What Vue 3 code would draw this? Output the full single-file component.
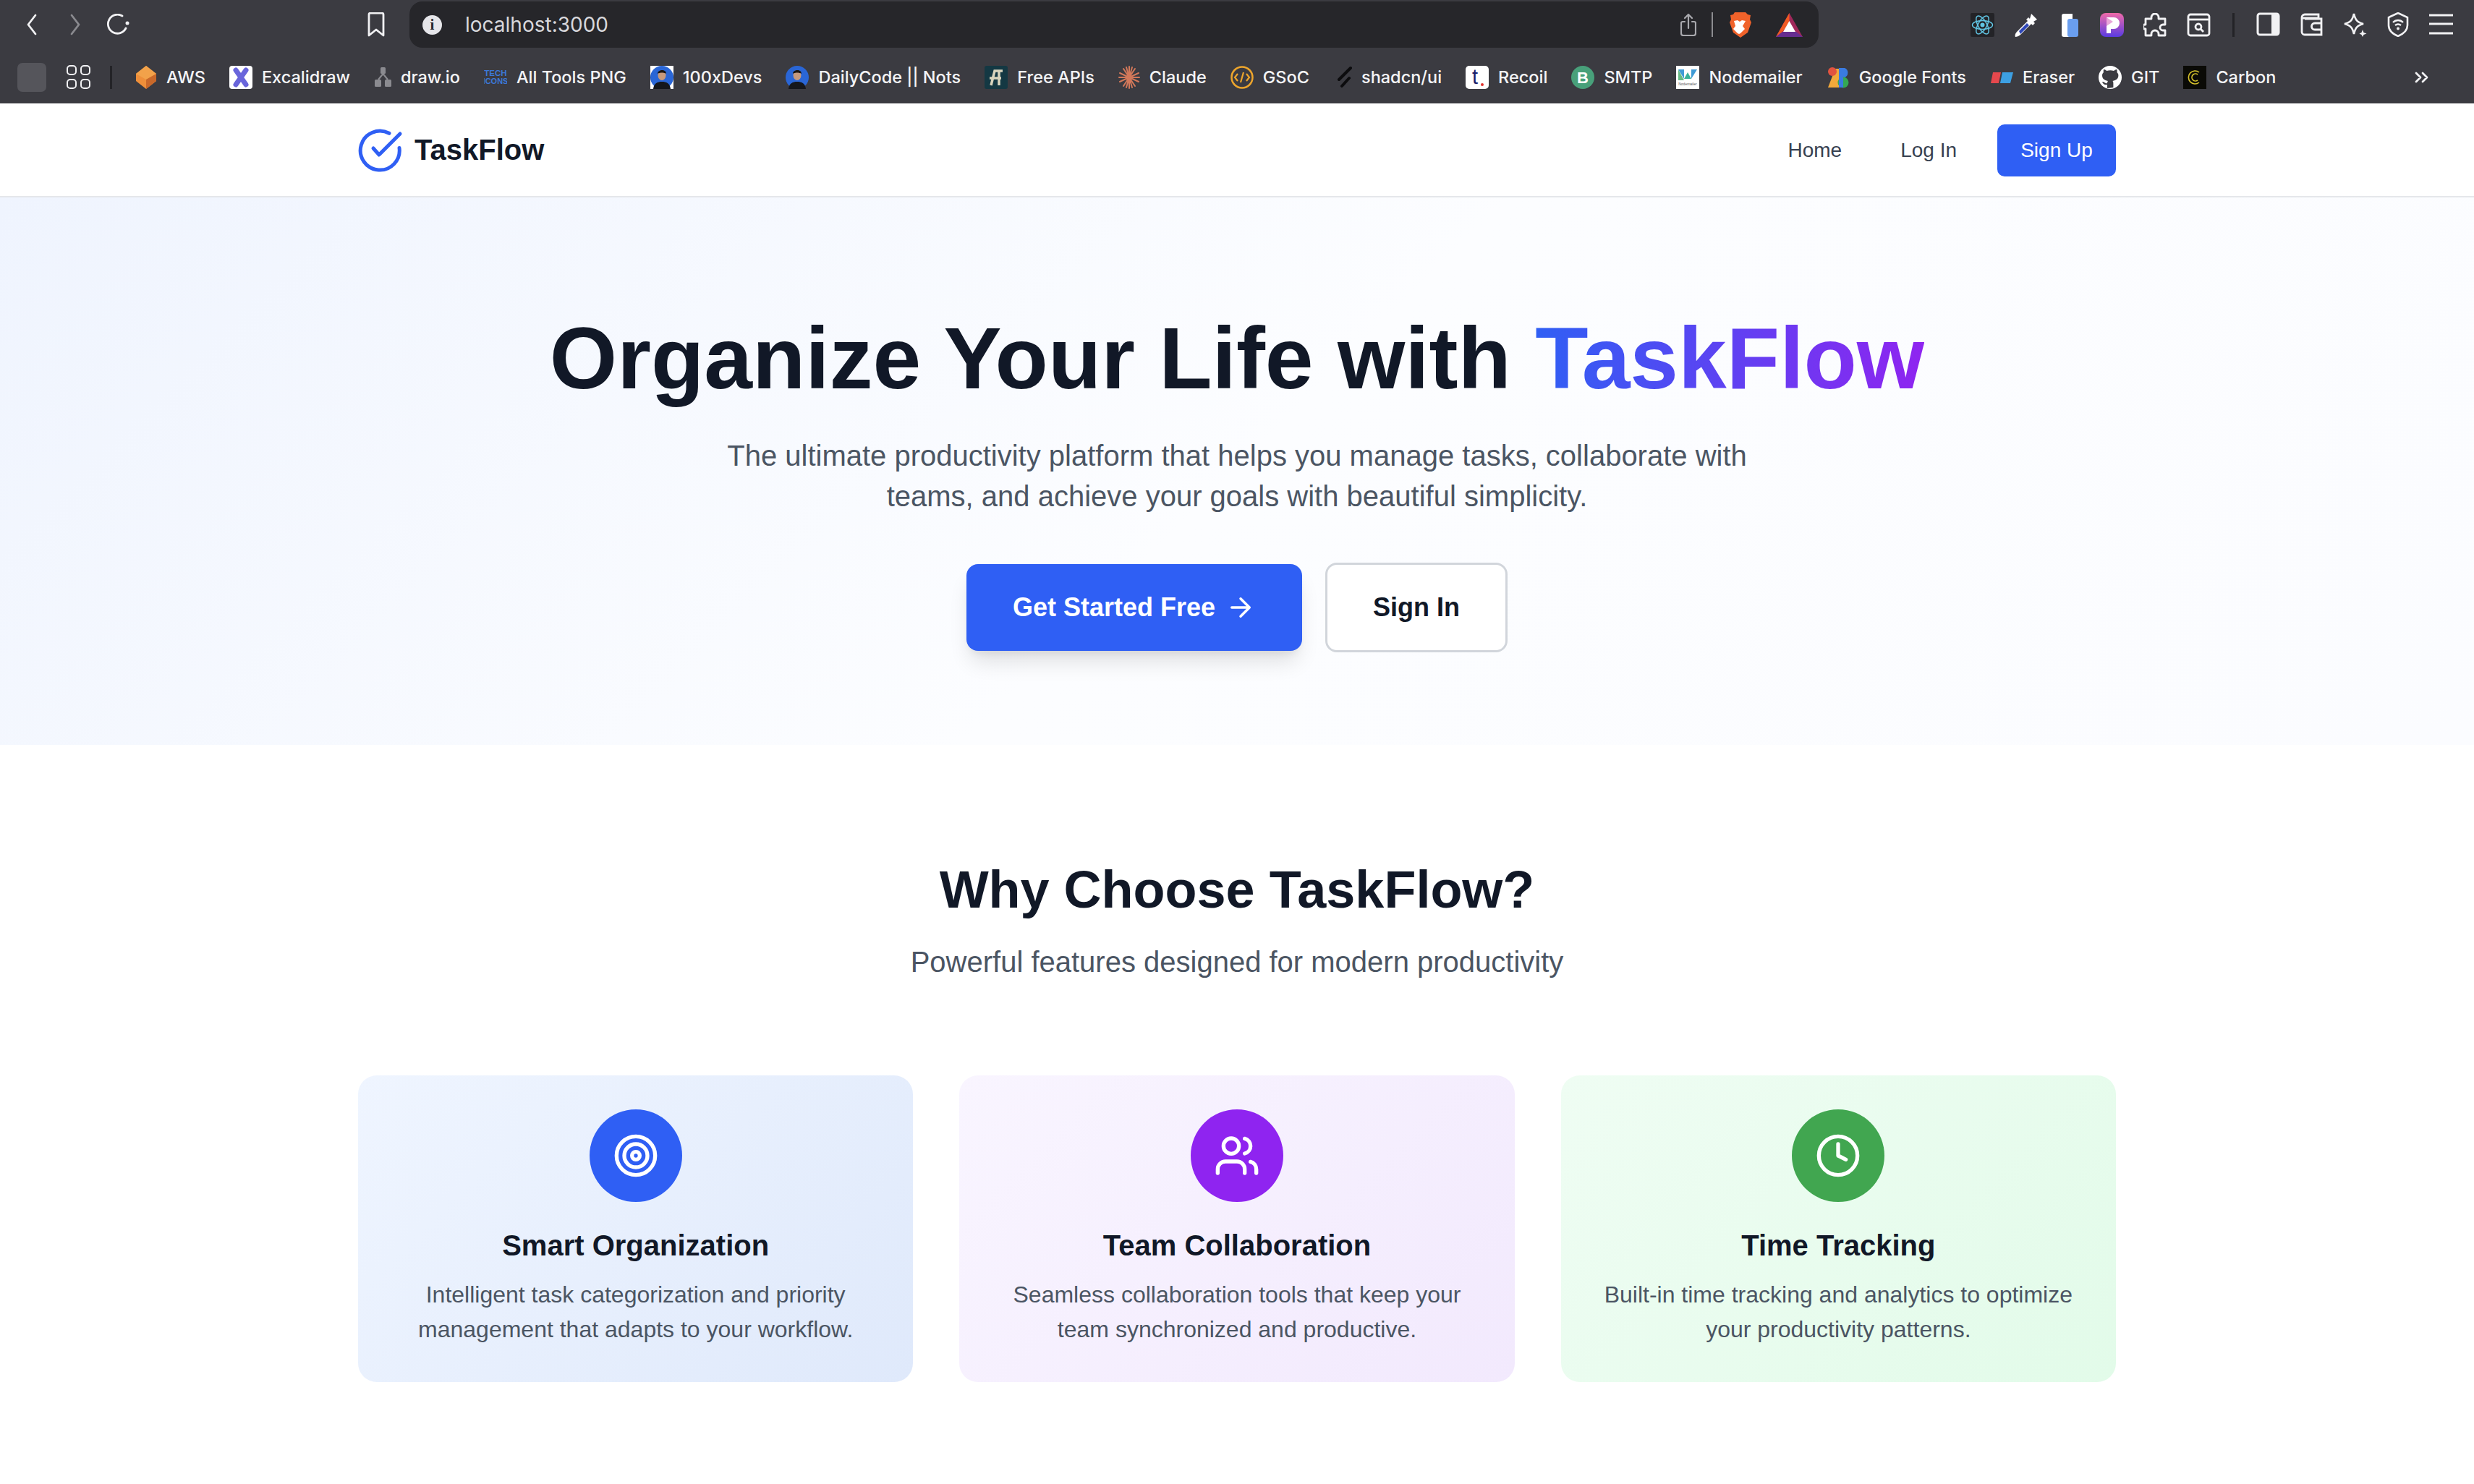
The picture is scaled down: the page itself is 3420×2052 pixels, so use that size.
<script setup>
const face = (bg) => `<rect width="32" height="32" fill="${bg}"/><circle cx="16" cy="16" r="16" fill="#2a66d6"/><path d="M4 32c1-8 6-10 12-10s11 2 12 10z" fill="#15171c"/><ellipse cx="16" cy="13" rx="5.5" ry="7" fill="#c79a7c"/><path d="M10 11c0-6 12-7 12 0-3-2-9-2-12 0z" fill="#1c1714"/>`

const bookmarks = [
  { name: 'AWS', icon: '<g transform="translate(1 0)"><path d="M14 0 28 11v10L14 32 0 21V11z" fill="#ee8f3a"/><path d="M14 0 0 11l14 8 14-8z" fill="#f2a24a"/><path d="M14 19v13l14-11V11z" fill="#c9682a"/></g>', w: 30 },
  { name: 'Excalidraw', icon: '<rect width="32" height="32" rx="4" fill="#fff"/><path d="M9 6l14 20M23 6 9 26" stroke="#6965db" stroke-width="7" stroke-linecap="round"/>' },
  { name: 'draw.io', icon: '<g fill="#8b8b90"><rect x="9" y="2" width="7" height="9" rx="1.5"/><rect x="1" y="19" width="9" height="10" rx="1.5"/><rect x="15" y="19" width="9" height="10" rx="1.5"/></g><path d="M12.500 11 6 19M12.500 11 19 19" stroke="#8b8b90" stroke-width="2"/>', w: 24 },
  { name: 'All Tools PNG', icon: '<text x="16" y="14" font-size="11.500" font-weight="700" text-anchor="middle" fill="#3c78d8" font-family="Liberation Sans">TECH</text><text x="16" y="25" font-size="11" font-weight="700" text-anchor="middle" fill="#3c78d8" font-family="Liberation Sans">ICONS</text>' },
  { name: '100xDevs', icon: face('#fff') },
  { name: 'DailyCode || Nots', icon: face('transparent') },
  { name: 'Free APIs', icon: '<rect width="32" height="32" rx="3" fill="#143843"/><path d="M9 27 14 7h11M7 17h16M20 8v19" stroke="#d8d4bd" stroke-width="3.500" fill="none"/>' },
  { name: 'Claude', icon: '<g stroke="#d2785a" stroke-width="2" stroke-linecap="round"><path d="M15 1v30M7 4l16 24M23 4 7 28M1 16h28M2 10l26 12M28 10 2 22M11 2l8 28M19 2l-8 28"/></g>', w: 30 },
  { name: 'GSoC', icon: '<circle cx="16" cy="16" r="14.500" fill="none" stroke="#eda52c" stroke-width="2.500"/><path d="M10 11l-4 5 4 5M22 11l4 5-4 5M18 9l-4 14" fill="none" stroke="#eda52c" stroke-width="2.200"/>' },
  { name: 'shadcn/ui', icon: '<path d="M24 3 8 19M22 17l-10 11" stroke="#0c0c0e" stroke-width="4" stroke-linecap="round"/>', w: 26 },
  { name: 'Recoil', icon: '<rect width="32" height="32" rx="5" fill="#fff"/><text x="13" y="25" font-size="29" text-anchor="middle" fill="#1a1f6b" font-family="Liberation Sans">t</text><circle cx="23" cy="26" r="2" fill="#e0312c"/>' },
  { name: 'SMTP', icon: '<circle cx="16" cy="16" r="16" fill="#48a07a"/><text x="16" y="24" font-size="22" font-weight="700" text-anchor="middle" fill="#fff" font-family="Liberation Sans">B</text>' },
  { name: 'Nodemailer', icon: '<rect width="32" height="32" fill="#fff"/><path d="M3 5l8 13V5zM29 5l-8 13V5z" fill="#3f9bd6"/><path d="M11 18 16 9l5 9z" fill="#39b29a"/><path d="M3 5v15h8z" fill="#68bb85"/><text x="16" y="27" font-size="5" text-anchor="middle" fill="#555" font-family="Liberation Sans">Nodemailer</text>' },
  { name: 'Google Fonts', icon: '<path d="M2 30 12 4h5v26z" fill="#f2a93b"/><circle cx="8" cy="8" r="6" fill="#e2533f"/><path d="M17 3h8a7 7 0 0 1 0 13h-8z" fill="#3a7be0"/><circle cx="23" cy="23" r="7.500" fill="#34a853"/><path d="M17 16h6v14h-6z" fill="#3a7be0"/>' },
  { name: 'Eraser', icon: '<path d="M4 9h11l-3 15H1z" fill="#e5484d"/><path d="M17 9h15l-4 15H14z" fill="#3da0e3"/>' },
  { name: 'GIT', icon: '<circle cx="16" cy="16" r="16" fill="#fff"/><path d="M12 31v-5c-5 1-6-2-7-4 3 0 4 3 7 2 0-2 1-3 1-3-5-1-8-3-8-8 0-2 1-3 2-4-.4-1-.4-3 .2-4 2 0 3 1 4 2 3-1 7-1 10 0 1-1 2-2 4-2 .6 1 .6 3 .2 4 1 1 2 2 2 4 0 5-3 7-8 8 1 1 1 2 1 4v5z" fill="#3b3b41"/>' },
  { name: 'Carbon', icon: '<rect width="32" height="32" fill="#0a0a06"/><path d="M22 9a9 9 0 1 0 0 14M20 12a5 5 0 1 0 0 8" fill="none" stroke="#d6c22c" stroke-width="1.600"/>' },
]

const extensions = [
  { w: 33, icon: '<rect width="33" height="33" rx="2" fill="#232327"/><g fill="none" stroke="#61c5e4" stroke-width="1.500"><ellipse cx="16.500" cy="16.500" rx="14" ry="6"/><ellipse cx="16.500" cy="16.500" rx="14" ry="6" transform="rotate(60 16.500 16.500)"/><ellipse cx="16.500" cy="16.500" rx="14" ry="6" transform="rotate(120 16.500 16.500)"/></g><circle cx="16.500" cy="16.500" r="3" fill="#61c5e4"/>' },
  { w: 33, icon: '<path d="M24 1l8 8-5 3 2 2-3 3-2-2L9 30c-2 2-5 3-7 3-1-2 0-5 2-7L19 11l-2-2 3-3 2 2z" fill="#fff"/><path d="M7 25 18 14l3 3L9 29z" fill="#3048b8"/>' },
  { w: 32, icon: '<path d="M3 4a3 3 0 0 1 3-3h12v32H6a3 3 0 0 1-3-3z" fill="#fff" transform="translate(3 0)"/><rect x="14" y="8" width="15" height="25" rx="3" fill="#6a9eef"/>' },
  { w: 33, icon: '<defs><linearGradient id="pp" x1="0" y1="0" x2="0" y2="1"><stop offset="0" stop-color="#f06aa8"/><stop offset="1" stop-color="#5a3be2"/></linearGradient></defs><rect width="33" height="33" rx="8" fill="url(#pp)"/><path d="M9 6h10a8 8 0 0 1 0 16h-4v6h-6z" fill="#fff"/><path d="M9 6l9 6-9 6z" fill="#e8a6d8"/>' },
  { w: 33, stroke: true, icon: '<path d="M11 6a5 5 0 0 1 10 0v2h9v8h-3a4 4 0 0 0 0 8h3v7H21v-2a5 5 0 0 0-10 0v2H3v-9H1a4 4 0 0 1 0-6h2V8h8z"/>' },
  { w: 33, stroke: true, icon: '<rect x="2" y="2" width="29" height="29" rx="3"/><path d="M2 9h29"/><circle cx="16" cy="19" r="4"/><path d="M19 22l4 4"/>' },
]

const menuIcons = [
  { w: 33, icon: '<rect x="2" y="2" width="29" height="29" rx="3" fill="none" stroke="#f1f1f3" stroke-width="3"/><rect x="21" y="2" width="10" height="29" fill="#f1f1f3"/>' },
  { w: 33, icon: '<path d="M3 7a4 4 0 0 1 4-4h19v5H3zM3 7v20a4 4 0 0 0 4 4h23V9H7M30 15H21a4 4 0 0 0 0 9h9" fill="none" stroke="#f1f1f3" stroke-width="2.800"/>' },
  { w: 34, icon: '<path d="M15 2c2 9 5 12 13 14-8 2-11 5-13 14-2-9-5-12-13-14 8-2 11-5 13-14z" fill="none" stroke="#f1f1f3" stroke-width="2.600"/><path d="M27 24l1.500 4 4 1.500-4 1.500-1.500 3-1.500-3-3-1.500 3-1.500z" fill="#f1f1f3"/>' },
  { w: 31, icon: '<path d="M15 1 28 7v11c0 7-6 12-13 15C8 30 2 25 2 18V7z" fill="none" stroke="#f1f1f3" stroke-width="2.600"/><path d="M8 14c4-4 10-4 14 0M11 18c2.500-2 5.500-2 8 0" fill="none" stroke="#f1f1f3" stroke-width="2.400"/><circle cx="15" cy="22.500" r="2" fill="#f1f1f3"/>' },
  { w: 33, icon: '<path d="M0 4h33M0 16h33M0 29h33" stroke="#f1f1f3" stroke-width="3"/>' },
]

const features = [
  { title: 'Smart Organization', tone: 'blue', lines: ['Intelligent task categorization and priority', 'management that adapts to your workflow.'] },
  { title: 'Team Collaboration', tone: 'purple', lines: ['Seamless collaboration tools that keep your', 'team synchronized and productive.'] },
  { title: 'Time Tracking', tone: 'green', lines: ['Built-in time tracking and analytics to optimize', 'your productivity patterns.'] },
]
</script>

<template>
  <div class="page">
    <header class="browser">
      <div class="toolbar">
        <div class="nav-btns">
          <svg class="back" viewBox="0 0 14 30"><path d="M12 2 2 15l10 13" /></svg>
          <svg class="fwd" viewBox="0 0 14 30"><path d="M2 2l10 13L2 28" /></svg>
          <svg class="reload" viewBox="0 0 34 30"><path d="M22 3a13 13 0 1 0 5 17" /><circle cx="29" cy="13" r="2.500" fill="#f1f1f3" stroke="none" /></svg>
        </div>
        <svg class="save" viewBox="0 0 24 34"><path d="M2 3a2 2 0 0 1 2-2h16a2 2 0 0 1 2 2v29l-10-8-10 8z" /></svg>
        <div class="address">
          <span class="info">i</span>
          <span class="url">localhost:3000</span>
          <svg class="share" viewBox="0 0 22 32"><path d="M6 12H3a2 2 0 0 0-2 2v14a3 3 0 0 0 3 3h14a3 3 0 0 0 3-3V14a2 2 0 0 0-2-2h-3M11 21V2M6 7l5-5 5 5" /></svg>
          <span class="addr-sep"></span>
          <svg class="brave" viewBox="0 0 33 36"><path d="M9 1h15l3 3 4 1-1 6 2 4-5 14-10 7-10-7L2 15l2-4-1-6 4-1z" fill="#f0622a" /><path d="M8 13l5-1 3 2 3-2 5 1-4 7 3 4-6 6-2 1-2-1-6-6 3-4z" fill="#fff" /></svg>
          <svg class="bat" viewBox="0 0 37 33"><path d="M18.500 0 37 33H0z" fill="#a0285a" /><path d="M18.500 0v14L9 26 0 33z" fill="#f15a22" /><path d="M0 33h37l-9-7H9z" fill="#662d91" /><path d="M18.500 11 27 26H10z" fill="#fff" /></svg>
        </div>
        <div class="ext-group">
          <svg v-for="(e, i) in extensions" :key="i" class="ext" :class="{ outlined: e.stroke }" :width="e.w" height="33" :viewBox="`0 0 ${e.w} 33`" v-html="e.icon"></svg>
        </div>
        <span class="tool-sep"></span>
        <div class="menu-group">
          <svg v-for="(e, i) in menuIcons" :key="i" :width="e.w" height="34" :viewBox="`0 0 ${e.w} 34`" v-html="e.icon"></svg>
        </div>
      </div>
      <div class="bookmarks">
        <span class="profile"></span>
        <span class="apps"><i></i><i></i><i></i><i></i></span>
        <span class="bm-sep"></span>
        <div v-for="b in bookmarks" :key="b.name" class="bookmark">
          <svg :width="b.w || 32" height="32" :viewBox="`0 0 ${b.w || 32} 32`" v-html="b.icon"></svg>
          <span>{{ b.name }}</span>
        </div>
        <svg class="more" viewBox="0 0 20 16"><path d="M2 2l6 6-6 6M11 2l6 6-6 6" /></svg>
      </div>
    </header>

    <nav class="topnav">
      <div class="container topnav-inner">
        <div class="logo">
          <svg class="logo-icon" viewBox="0 0 60 60">
            <path d="M57 26.500A27 27 0 1 1 43 6.300" />
            <path d="M21 27l8 9 29-29" />
          </svg>
          <span>TaskFlow</span>
        </div>
        <div class="links">
          <a>Home</a>
          <a class="login">Log In</a>
          <a class="signup">Sign Up</a>
        </div>
      </div>
    </nav>

    <section class="hero">
      <h1>Organize Your Life with <span class="grad">TaskFlow</span></h1>
      <p>The ultimate productivity platform that helps you manage tasks, collaborate with<br>teams, and achieve your goals with beautiful simplicity.</p>
      <div class="cta">
        <a class="btn primary">
          Get Started Free
          <svg viewBox="0 0 24 24"><path d="M5 12h14M12 5l7 7-7 7" /></svg>
        </a>
        <a class="btn ghost">Sign In</a>
      </div>
    </section>

    <section class="features">
      <h2>Why Choose TaskFlow?</h2>
      <p class="lead">Powerful features designed for modern productivity</p>
      <div class="container grid">
        <article v-for="f in features" :key="f.title" class="card" :class="f.tone">
          <div class="circle">
            <svg viewBox="0 0 24 24">
              <template v-if="f.tone === 'blue'">
                <circle cx="12" cy="12" r="10" /><circle cx="12" cy="12" r="6" /><circle cx="12" cy="12" r="2" />
              </template>
              <template v-else-if="f.tone === 'purple'">
                <path d="M16 21v-2a4 4 0 0 0-4-4H6a4 4 0 0 0-4 4v2" /><circle cx="9" cy="7" r="4" /><path d="M22 21v-2a4 4 0 0 0-3-3.870" /><path d="M16 3.130a4 4 0 0 1 0 7.750" />
              </template>
              <template v-else>
                <circle cx="12" cy="12" r="10" /><path d="M12 6v6l4 2" />
              </template>
            </svg>
          </div>
          <h3>{{ f.title }}</h3>
          <p><template v-for="(l, i) in f.lines" :key="i">{{ l }}<br></template></p>
        </article>
      </div>
    </section>
  </div>
</template>

<style>
html, body { margin: 0; background: #fff; }
</style>

<style scoped>
.page {
  width: 3420px;
  height: 2052px;
  overflow: hidden;
  font-family: "Liberation Sans", Arial, sans-serif;
  color: #111827;
}

/* browser chrome */
.browser {
  height: 143px;
  background: #3b3b41;
  color: #f4f4f6;
  font-family: Inter, "Liberation Sans", sans-serif;
  box-sizing: border-box;
}
.toolbar {
  height: 70px;
  display: flex;
  align-items: flex-start;
  padding-left: 37px;
}
.nav-btns {
  display: flex;
  align-items: center;
  gap: 46px;
  margin-top: 19px;
  width: 471px;
}
.nav-btns svg, .save, .share, .more {
  fill: none;
  stroke: #f1f1f3;
  stroke-width: 2.800;
  stroke-linecap: round;
  stroke-linejoin: round;
}
.back, .fwd { width: 14px; height: 30px; }
.fwd { stroke: #8a8a8f !important; }
.reload { width: 34px; height: 30px; margin-left: -10px; }
.save { width: 24px; height: 34px; margin-top: 17px; }
.address {
  width: 1948px;
  height: 64px;
  margin: 2px 0 0 34px;
  background: #26262a;
  border-radius: 18px;
  display: flex;
  align-items: center;
  padding: 0 22px 0 18px;
  box-sizing: border-box;
}
.info {
  width: 27px;
  height: 27px;
  border-radius: 50%;
  background: #e6e6ea;
  color: #26262a;
  font: 700 21px/27px "Liberation Serif", serif;
  text-align: center;
}
.url {
  margin-left: 32px;
  font-size: 28px;
  color: #d8d8dc;
  flex: 1;
}
.share { width: 22px; height: 32px; stroke: #a9a9ae; stroke-width: 2.200; }
.addr-sep { width: 2px; height: 34px; background: #8c8c90; margin: 0 21px; }
.brave { width: 33px; height: 36px; }
.bat { width: 37px; height: 33px; margin-left: 33px; }
.ext-group {
  display: flex;
  gap: 27px;
  margin: 18px 0 0 210px;
}
.ext { flex: none; }
.ext.outlined :deep(*) { fill: none; stroke: #f1f1f3; stroke-width: 2.800; stroke-linejoin: round; }
.tool-sep { width: 3px; height: 33px; background: #232327; margin: 18px 30px 0 30px; }
.menu-group { display: flex; gap: 27px; margin-top: 17px; }

.bookmarks {
  height: 73px;
  display: flex;
  align-items: center;
  padding: 0 0 0 24px;
  box-sizing: border-box;
}
.profile { width: 40px; height: 40px; border-radius: 7px; background: #55555b; }
.apps {
  display: grid;
  grid-template-columns: 14px 14px;
  gap: 5px;
  margin-left: 28px;
}
.apps i { height: 14px; border: 2.500px solid #f1f1f3; border-radius: 5px; box-sizing: border-box; }
.bm-sep { width: 3px; height: 32px; background: #232327; margin: 0 32px 0 27px; }
.bookmark {
  display: flex;
  align-items: center;
  gap: 13px;
  margin-right: 33px;
  font-size: 23.500px;
  font-weight: 500;
  white-space: nowrap;
  color: #f4f4f6;
}
.bookmark svg { flex: none; }
.more { width: 20px; height: 16px; margin-left: auto; margin-right: 62px; }

/* site nav */
.container { width: 2430px; margin: 0 auto; }
.topnav {
  height: 130px;
  padding-top: 1px;
  box-sizing: border-box;
  border-bottom: 2px solid #e5e7eb;
  background: #fff;
}
.topnav-inner {
  height: 100%;
  display: flex;
  align-items: center;
  justify-content: space-between;
}
.logo {
  display: flex;
  align-items: center;
  gap: 18px;
  font-size: 40px;
  font-weight: 700;
}
.logo-icon {
  width: 60px;
  height: 60px;
  overflow: visible;
  fill: none;
  stroke: #2f5ff4;
  stroke-width: 5;
  stroke-linecap: round;
  stroke-linejoin: round;
}
.links {
  display: flex;
  align-items: center;
  font-size: 28px;
  color: #374151;
}
.links a { margin-right: 81px; }
.links .login { margin-right: 56px; }
.links .signup {
  margin: 0;
  width: 164px;
  height: 72px;
  line-height: 72px;
  text-align: center;
  background: #2f5ff4;
  color: #fff;
  border-radius: 10px;
}

/* hero */
.hero {
  height: 757px;
  box-sizing: border-box;
  padding-top: 156px;
  text-align: center;
  background: linear-gradient(135deg, #eff4fe 0%, #fcfdff 50%, #fbfcff 100%);
}
h1 {
  margin: 0;
  font-size: 120px;
  line-height: 132px;
  font-weight: 700;
  white-space: nowrap;
}
.grad {
  background: linear-gradient(90deg, #2f5ff4, #8f24f0);
  -webkit-background-clip: text;
  background-clip: text;
  color: transparent;
}
.hero p {
  margin: 41px 0 0;
  font-size: 40px;
  line-height: 56px;
  color: #4b5563;
}
.cta {
  margin-top: 64px;
  display: flex;
  justify-content: center;
  align-items: center;
  gap: 32px;
}
.btn {
  display: flex;
  align-items: center;
  justify-content: center;
  box-sizing: border-box;
  font-size: 36px;
  font-weight: 700;
  border-radius: 16px;
}
.primary {
  width: 464px;
  height: 120px;
  gap: 14px;
  background: #2f5ff4;
  color: #fff;
  box-shadow: 0 20px 30px -6px rgba(0, 0, 0, 0.12), 0 8px 12px -6px rgba(0, 0, 0, 0.08);
}
.primary svg {
  width: 42px;
  height: 42px;
  fill: none;
  stroke: #fff;
  stroke-width: 2;
  stroke-linecap: round;
  stroke-linejoin: round;
}
.ghost {
  width: 252px;
  height: 124px;
  background: #fff;
  border: 3px solid #d1d5db;
  color: #111827;
}

/* features */
.features {
  padding-top: 154px;
  text-align: center;
  background: #fff;
}
h2 {
  margin: 0;
  font-size: 72px;
  line-height: 92px;
  font-weight: 700;
}
.lead {
  margin: 26px 0 0;
  font-size: 40px;
  line-height: 56px;
  color: #4b5563;
}
.grid {
  margin-top: 129px;
  display: grid;
  grid-template-columns: repeat(3, 1fr);
  gap: 64px;
}
.card {
  height: 424px;
  box-sizing: border-box;
  padding-top: 47px;
  border-radius: 26px;
}
.card.blue { background: linear-gradient(135deg, #eff5ff, #dfe9fb); }
.card.purple { background: linear-gradient(135deg, #f9f5ff, #f2e9fd); }
.card.green { background: linear-gradient(135deg, #effdf3, #e2fbe9); }
.circle {
  width: 128px;
  height: 128px;
  margin: 0 auto;
  border-radius: 50%;
  display: flex;
  align-items: center;
  justify-content: center;
}
.blue .circle { background: #2f5ff4; }
.purple .circle { background: #8f24f0; }
.green .circle { background: #41a650; }
.circle svg {
  width: 64px;
  height: 64px;
  fill: none;
  stroke: #fff;
  stroke-width: 2;
  stroke-linecap: round;
  stroke-linejoin: round;
}
h3 {
  margin: 34px 0 0;
  font-size: 40px;
  line-height: 52px;
  font-weight: 700;
}
.card p {
  margin: 18px 0 0;
  font-size: 32px;
  line-height: 48px;
  color: #4b5563;
}
</style>
